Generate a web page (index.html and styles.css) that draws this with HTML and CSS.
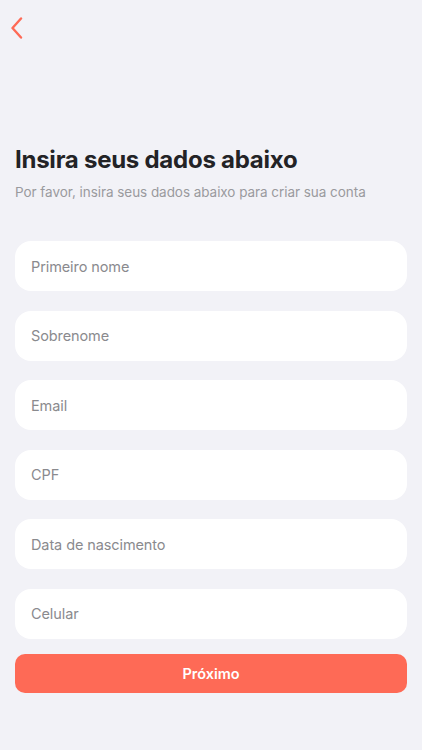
FILE: index.html
```html
<!DOCTYPE html>
<html lang="pt-BR">
<head>
<meta charset="utf-8">
<title>Cadastro</title>
<link rel="stylesheet" href="styles.css">
</head>
<body>
<div class="screen">
  <header class="nav">
    <button class="back" aria-label="Voltar">
      <svg width="14" height="22" viewBox="0 0 14 22"><path d="M11 1.5 L2.5 11 L11 20.5" fill="none" stroke="#fe6a56" stroke-width="2.4" stroke-linecap="round" stroke-linejoin="round"/></svg>
    </button>
  </header>
  <main class="content">
    <h1 class="title">Insira seus dados abaixo</h1>
    <p class="subtitle">Por favor, insira seus dados abaixo para criar sua conta</p>
    <form class="form">
      <div class="field">Primeiro nome</div>
      <div class="field">Sobrenome</div>
      <div class="field">Email</div>
      <div class="field">CPF</div>
      <div class="field">Data de nascimento</div>
      <div class="field">Celular</div>
      <div class="submit">Próximo</div>
    </form>
  </main>
</div>
</body>
</html>
```

FILE: styles.css
```css
* { box-sizing: border-box; }
html, body { margin: 0; padding: 0; }
body {
  background: #f2f2f7;
  font-family: Inter, "Noto Sans", sans-serif;
  width: 422px;
  height: 750px;
  overflow: hidden;
}
.screen { padding: 0 15px; }
.nav { height: 56px; padding-top: 17px; }
.back {
  border: 0; background: none; padding: 0; margin-left: -8px;
  width: 20px; height: 24px; display: block;
}
.content { padding-top: 88px; }
.title {
  margin: 0;
  font-size: 24px;
  font-weight: 700;
  letter-spacing: -0.25px;
  color: #232326;
  line-height: 32px;
}
.subtitle {
  margin: 7px 0 0;
  font-size: 13.5px;
  color: #9a9a9e;
  line-height: 18px;
  letter-spacing: -0.05px;
}
.form {
  margin-top: 40px;
  display: flex;
  flex-direction: column;
  gap: 19.6px;
}
.field {
  height: 50px;
  background: #fff;
  border-radius: 16px;
  padding: 0 16px;
  display: flex;
  align-items: center;
  font-size: 14.5px;
  color: #8a8a8e;
  letter-spacing: -0.1px;
}
.submit {
  margin-top: -4.5px;
  height: 39px;
  background: #fe6a56;
  border-radius: 10px;
  display: flex;
  align-items: center;
  justify-content: center;
  color: #fff;
  font-size: 14.5px;
  font-weight: 600;
}
```
